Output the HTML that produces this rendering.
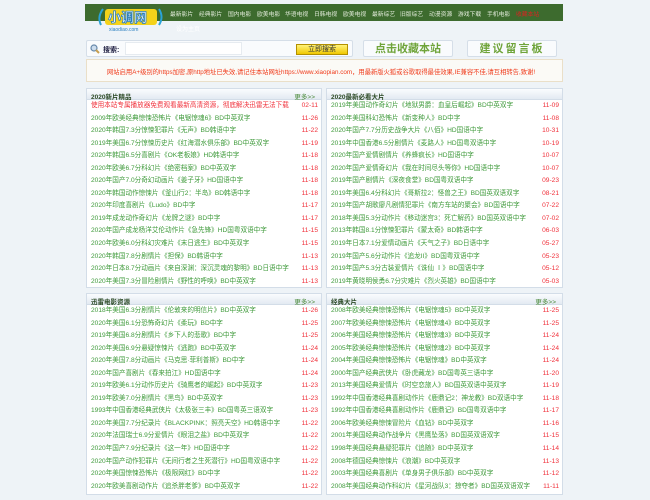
<!DOCTYPE html>
<html><head><meta charset="utf-8"><style>
*{margin:0;padding:0;box-sizing:border-box}
body{width:650px;height:500px;background:#eef3f7;font-family:"Liberation Sans","Noto Sans CJK SC",sans-serif;position:relative;overflow:hidden}
.abs{position:absolute}
#nav{left:85px;top:4px;width:478px;height:17px;background:#3d6b2e}
#nav span{position:absolute;top:5px;font-size:5.8px;color:#e4ecdc;white-space:nowrap}
.box{background:#f9fbfd;border:1px solid #d5dee8;border-radius:2px}
.panel{background:#fff;border:1px solid #d3dde8}
.ph{height:11px;background:linear-gradient(#fafcfe,#e3eaf2);border-bottom:1px solid #d3dde8;font-size:6.5px;font-weight:bold;color:#2c4a26;padding:2px 4px;position:relative}
.ph i{position:absolute;right:6px;top:2px;font-style:normal;font-weight:normal;color:#4a8a3a}
.row{height:12.55px;font-size:6.6px;line-height:12.55px;color:#3e9a3a;padding:0 4px;position:relative;white-space:nowrap}
.row b{position:absolute;right:3px;font-weight:normal;color:#f0303a}
</style></head><body>
<div id="nav" class="abs">
<span style="left:85px">最新影片</span><span style="left:114px">经典影片</span><span style="left:143px">国内电影</span><span style="left:172px">欧美电影</span><span style="left:200px">华语电视</span><span style="left:229px">日韩电视</span><span style="left:258px">欧美电视</span><span style="left:287px">最新综艺</span><span style="left:315px">旧版综艺</span><span style="left:344px">动漫资源</span><span style="left:373px">游戏下载</span><span style="left:402px">手机电影</span><span style="left:431px;color:#d22">收藏本站</span>
</div>
<div class="abs" style="left:176px;top:24px;font-size:6px;color:#fff">设为主页</div>
<svg class="abs" style="left:95px;top:3px" width="70" height="30">
<path d="M6 22 Q2 14 8 6" stroke="#2aa3d8" stroke-width="2" fill="none"/><path d="M64 6 Q69 14 64 22" stroke="#2aa3d8" stroke-width="2" fill="none"/>
<rect x="10" y="6" width="52" height="16" rx="3" fill="#f4d21a"/>
<text x="13" y="19" font-size="13" font-weight="bold" fill="#fff" stroke="#2a7fc0" stroke-width="0.8" font-family="Noto Sans CJK SC,sans-serif">小调网</text>
<text x="14" y="28" font-size="5" fill="#2a7fc0" font-family="Liberation Sans,sans-serif">xiaodiao.com</text>
</svg>
<div class="abs box" style="left:86px;top:40px;width:267px;height:17px">
<svg class="abs" style="left:3px;top:3px" width="10" height="10"><circle cx="4" cy="4" r="3" stroke="#6688aa" fill="#cde" stroke-width="1.2"/><path d="M6 6 L9 9" stroke="#c8a050" stroke-width="2"/></svg>
<span class="abs" style="left:16px;top:4px;font-size:7px;font-weight:bold;color:#224">搜索:</span>
<div class="abs" style="left:38px;top:1px;width:117px;height:13px;background:#fff;border:1px solid #e6ebf0"></div>
<div class="abs" style="left:209px;top:3px;width:52px;height:11px;background:linear-gradient(#fff27a,#f0c800);border:1px solid #b39000;font-size:7px;text-align:center;line-height:9px;color:#333">立即搜索</div>
</div>
<div class="abs box" style="left:363px;top:40px;width:90px;height:17px;font-size:11px;font-weight:bold;color:#6fa43a;text-align:center;line-height:16px">点击收藏本站</div>
<div class="abs box" style="left:467px;top:40px;width:90px;height:17px;font-size:11px;font-weight:bold;color:#6fa43a;text-align:center;line-height:16px;letter-spacing:2px">建议留言板</div>
<div class="abs" style="left:86px;top:59px;width:477px;height:23px;background:#fbfaf6;border:1px solid #eadfc8;font-size:6.3px;color:#f03a1a;padding:7px 0 0 20px;white-space:nowrap">网站启用A+级别的https加密,原http地址已失效,请记住本站网址https://www.xiaopian.com，用最新版火狐或谷歌取得最佳效果,IE兼容不佳,请互相转告,致谢!</div>

<div class="abs panel" style="left:86px;top:88px;width:236px;height:200px">
<div class="ph">2020新片精品<i>更多&gt;&gt;</i></div>
<div class="row" style="color:#f0303a">使用本站专属播放器免费观看最新高清资源，彻底解决迅雷无法下载<b>02-11</b></div>
<div class="row">2009年欧美经典惊悚恐怖片《电锯惊魂6》BD中英双字<b>11-26</b></div>
<div class="row">2020年韩国7.3分惊悚犯罪片《无声》BD韩语中字<b>11-22</b></div>
<div class="row">2019年美国6.7分惊悚历史片《红海潜水俱乐部》BD中英双字<b>11-19</b></div>
<div class="row">2020年韩国6.5分喜剧片《OK老板娘》HD韩语中字<b>11-18</b></div>
<div class="row">2020年欧美6.7分科幻片《绝密档案》BD中英双字<b>11-18</b></div>
<div class="row">2020年国产7.0分奇幻动画片《姜子牙》HD国语中字<b>11-18</b></div>
<div class="row">2020年韩国动作惊悚片《釜山行2：半岛》BD韩语中字<b>11-18</b></div>
<div class="row">2020年印度喜剧片《Ludo》BD中字<b>11-17</b></div>
<div class="row">2019年成龙动作奇幻片《龙牌之谜》BD中字<b>11-17</b></div>
<div class="row">2020年国产成龙杨洋艾伦动作片《急先锋》HD国粤双语中字<b>11-15</b></div>
<div class="row">2020年欧美6.0分科幻灾难片《末日逃生》BD中英双字<b>11-15</b></div>
<div class="row">2020年韩国7.8分剧情片《担保》BD韩语中字<b>11-13</b></div>
<div class="row">2020年日本8.7分动画片《来自深渊：深沉灵魂的黎明》BD日语中字<b>11-13</b></div>
<div class="row">2020年美国7.3分冒险剧情片《野性的呼唤》BD中英双字<b>11-13</b></div>
</div>
<div class="abs panel" style="left:326px;top:88px;width:237px;height:200px">
<div class="ph">2020最新必看大片</div>
<div class="row">2019年美国动作奇幻片《地狱男爵：血皇后崛起》BD中英双字<b>11-09</b></div>
<div class="row">2020年美国科幻恐怖片《新变种人》BD中字<b>11-08</b></div>
<div class="row">2020年国产7.7分历史战争大片《八佰》HD国语中字<b>10-31</b></div>
<div class="row">2019年中国香港6.5分剧情片《麦路人》HD国粤双语中字<b>10-19</b></div>
<div class="row">2020年国产爱情剧情片《养蜂疯长》HD国语中字<b>10-07</b></div>
<div class="row">2020年国产爱情奇幻片《我在时间尽头等你》HD国语中字<b>10-07</b></div>
<div class="row">2019年国产剧情片《深夜食堂》BD国粤双语中字<b>09-23</b></div>
<div class="row">2019年美国6.4分科幻片《哥斯拉2：怪兽之王》BD国英双语双字<b>08-21</b></div>
<div class="row">2019年国产胡歌廖凡剧情犯罪片《南方车站的聚会》BD国语中字<b>07-22</b></div>
<div class="row">2018年美国5.3分动作片《移动迷宫3：死亡解药》BD国英双语中字<b>07-02</b></div>
<div class="row">2013年韩国8.1分惊悚犯罪片《蒙太奇》BD韩语中字<b>06-03</b></div>
<div class="row">2019年日本7.1分爱情动画片《天气之子》BD日语中字<b>05-27</b></div>
<div class="row">2019年国产5.6分动作片《追龙II》BD国粤双语中字<b>05-23</b></div>
<div class="row">2019年国产5.3分古装爱情片《诛仙 Ⅰ》BD国语中字<b>05-12</b></div>
<div class="row">2019年黄晓明侯勇6.7分灾难片《烈火英雄》BD国语中字<b>05-03</b></div>
</div>

<div class="abs panel" style="left:86px;top:293px;width:236px;height:202px">
<div class="ph">迅雷电影资源<i>更多&gt;&gt;</i></div>
<div class="row">2018年美国6.3分剧情片《伦敦来的明信片》BD中英双字<b>11-26</b></div>
<div class="row">2020年美国6.1分恐怖奇幻片《柔玩》BD中字<b>11-25</b></div>
<div class="row">2019年美国6.8分剧情片《乡下人的悲歌》BD中字<b>11-25</b></div>
<div class="row">2020年美国6.9分悬疑惊悚片《逃跑》BD中英双字<b>11-24</b></div>
<div class="row">2020年美国7.8分动画片《马克思·菲利普斯》BD中字<b>11-24</b></div>
<div class="row">2020年国产喜剧片《春来拍江》HD国语中字<b>11-24</b></div>
<div class="row">2019年欧美6.1分动作历史片《骑鹰者的崛起》BD中英双字<b>11-23</b></div>
<div class="row">2019年欧美7.0分剧情片《黑鸟》BD中英双字<b>11-23</b></div>
<div class="row">1993年中国香港经典武侠片《太极张三丰》BD国粤英三语双字<b>11-23</b></div>
<div class="row">2020年美国7.7分纪录片《BLACKPINK：照亮天空》HD韩语中字<b>11-22</b></div>
<div class="row">2020年法国瑞士6.9分爱情片《眼泪之盐》BD中英双字<b>11-22</b></div>
<div class="row">2020年国产7.9分纪录片《这一年》HD国语中字<b>11-22</b></div>
<div class="row">2020年国产动作犯罪片《无间行者之生死潜行》HD国粤双语中字<b>11-22</b></div>
<div class="row">2020年美国惊悚恐怖片《极限网红》BD中字<b>11-22</b></div>
<div class="row">2020年欧美喜剧动作片《追杀胖老爹》BD中英双字<b>11-22</b></div>
</div>
<div class="abs panel" style="left:326px;top:293px;width:237px;height:202px">
<div class="ph">经典大片<i>更多&gt;&gt;</i></div>
<div class="row">2008年欧美经典惊悚恐怖片《电锯惊魂5》BD中英双字<b>11-25</b></div>
<div class="row">2007年欧美经典惊悚恐怖片《电锯惊魂4》BD中英双字<b>11-25</b></div>
<div class="row">2006年美国经典惊悚恐怖片《电锯惊魂3》BD中英双字<b>11-24</b></div>
<div class="row">2005年欧美经典惊悚恐怖片《电锯惊魂2》BD中英双字<b>11-24</b></div>
<div class="row">2004年美国经典惊悚恐怖片《电锯惊魂》BD中英双字<b>11-24</b></div>
<div class="row">2000年国产经典武侠片《卧虎藏龙》BD国粤英三语中字<b>11-20</b></div>
<div class="row">2013年美国经典爱情片《时空恋旅人》BD国英双语中英双字<b>11-19</b></div>
<div class="row">1992年中国香港经典喜剧动作片《鹿鼎记2：神龙教》BD双语中字<b>11-18</b></div>
<div class="row">1992年中国香港经典喜剧动作片《鹿鼎记》BD国粤双语中字<b>11-17</b></div>
<div class="row">2006年欧美经典惊悚冒险片《血钻》BD中英双字<b>11-16</b></div>
<div class="row">2001年美国经典动作战争片《黑鹰坠落》BD国英双语双字<b>11-15</b></div>
<div class="row">1998年美国经典悬疑犯罪片《追随》BD中英双字<b>11-14</b></div>
<div class="row">2008年德国经典惊悚片《浪潮》BD中英双字<b>11-13</b></div>
<div class="row">2003年美国经典喜剧片《单身男子俱乐部》BD中英双字<b>11-12</b></div>
<div class="row">2008年美国经典动作科幻片《星河战队3：掠夺者》BD国英双语双字<b>11-11</b></div>
</div>
</body></html>
